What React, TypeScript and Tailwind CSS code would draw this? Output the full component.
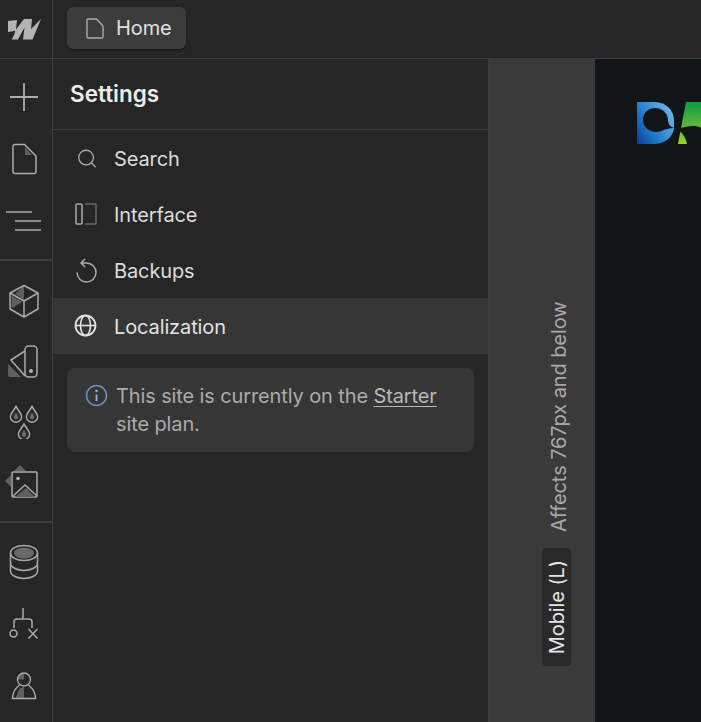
import { Search } from 'lucide-react'

const railIcon = 'block'
const stroke = '#ababab'

function WebflowLogo() {
  return (
    <svg width="33" height="22" viewBox="0 0 33 22" className={railIcon}>
      <path d="M0 3L9 2L8 11.500L16 1H24L23 11L33 1L24.500 21.500H15L16.500 9.500L10 21.500H3.500C6 18 7 15 7 12.500C5 13 2 14 0 14z" fill="#b4b4b4" />
    </svg>
  )
}

function PageIcon({ fold }: { fold?: boolean }) {
  return (
    <svg width="28" height="32" viewBox="0 0 28 32" fill="none" className={railIcon}>
      {fold && <path d="M15 4l7 8h-7z" fill="#5f5f5f" />}
      <path d="M3 3.500A2 2 0 0 1 5 1.500h9.500L26 13v15.500a2 2 0 0 1-2 2H5a2 2 0 0 1-2-2z" stroke={stroke} strokeWidth="1.500" />
    </svg>
  )
}

function RailButton({ children, h }: { children: React.ReactNode; h: string }) {
  return <div className={`flex items-center justify-center pr-[5px] ${h}`}>{children}</div>
}

function Rail() {
  return (
    <div className="w-[53px] shrink-0 border-r border-[#3e3e3e] flex flex-col">
      <div className="h-[200px] pt-[7px] flex flex-col">
        <RailButton h="h-[62px]">
          <svg width="30" height="30" viewBox="0 0 30 30" className={railIcon}>
            <path d="M15 1v28M1 15h28" stroke={stroke} strokeWidth="1.800" />
          </svg>
        </RailButton>
        <RailButton h="h-[62px]">
          <PageIcon fold />
        </RailButton>
        <RailButton h="h-[62px]">
          <svg width="38" height="24" viewBox="0 0 38 24" className={railIcon}>
            <path d="M1 3h26M10 12h26M10 21h26" stroke={stroke} strokeWidth="1.600" />
          </svg>
        </RailButton>
      </div>
      <div className="h-[262px] border-t-2 border-[#3e3e3e] flex flex-col pt-[9px]">
        <RailButton h="h-[61px]">
          <svg width="32" height="34" viewBox="0 0 32 34" fill="none" className={railIcon}>
            <path d="M16 2V15.500L7 10z" fill="#5f5f5f" />
            <path d="M3.500 11.500L14 18 3.500 24.500z" fill="#5f5f5f" />
            <path d="M16 1.500L30 9v16l-14 8L2 25V9zM2 9l14 8 14-8M16 17v16" stroke={stroke} strokeWidth="1.500" strokeLinejoin="round" />
          </svg>
        </RailButton>
        <RailButton h="h-[62px]">
          <svg width="32" height="34" viewBox="0 0 32 34" fill="none" className={railIcon}>
            <path d="M0 30V19l13 13H2a2 2 0 0 1-2-2z" fill="#5f5f5f" />
            <path d="M17 6L3 15l14 16" stroke={stroke} strokeWidth="1.500" strokeLinejoin="round" />
            <rect x="17" y="1" width="12" height="31" rx="3.500" fill="#262626" stroke={stroke} strokeWidth="1.500" />
            <circle cx="23" cy="26" r="2" fill="#b5b5b5" />
          </svg>
        </RailButton>
        <RailButton h="h-[58px]">
          <svg width="30" height="34" viewBox="0 0 30 34" fill="none" className={railIcon}>
            <path d="M7 1.500l4.500 7a5.500 5.500 0 1 1-9 0z" stroke={stroke} strokeWidth="1.500" />
            <path d="M23 1.500l4.500 7a5.500 5.500 0 1 1-9 0z" stroke={stroke} strokeWidth="1.500" />
            <path d="M15 19l4.500 7a5.500 5.500 0 1 1-9 0z" stroke={stroke} strokeWidth="1.500" />
            <path d="M7 7l2 4a2.300 2.300 0 1 1-4 0zM23 7l2 4a2.300 2.300 0 1 1-4 0zM15 24.500l2 4a2.300 2.300 0 1 1-4 0z" fill="#6a6a6a" />
          </svg>
        </RailButton>
        <RailButton h="h-[64px]">
          <svg width="36" height="38" viewBox="0 0 36 38" fill="none" className={`${railIcon} -ml-[4px]`}>
            <path d="M10 7l6-6 6 6zM1 17l6-6v12z" fill="#5f5f5f" />
            <rect x="8" y="8" width="25" height="25" rx="1" stroke={stroke} strokeWidth="1.500" />
            <path d="M11 33l11-9 9 9z" fill="#5f5f5f" />
            <path d="M8.500 32.500L21 21l12 11" stroke={stroke} strokeWidth="1.500" />
            <circle cx="14" cy="14.500" r="1.800" fill="#b5b5b5" />
          </svg>
        </RailButton>
      </div>
      <div className="flex-1 border-t-2 border-[#3e3e3e] flex flex-col pt-[8px]">
        <RailButton h="h-[62px]">
          <svg width="30" height="36" viewBox="0 0 30 36" fill="none" className={railIcon}>
            <ellipse cx="15" cy="9" rx="10" ry="5.500" fill="#6a6a6a" />
            <ellipse cx="15" cy="9" rx="13.500" ry="7.500" stroke={stroke} strokeWidth="1.500" />
            <path d="M1.500 9v18c0 4 6 7.500 13.500 7.500S28.500 31 28.500 27V9M1.500 19c0 4 6 7.500 13.500 7.500S28.500 23 28.500 19" stroke={stroke} strokeWidth="1.500" />
          </svg>
        </RailButton>
        <RailButton h="h-[62px]">
          <svg width="32" height="32" viewBox="0 0 32 32" fill="none" className={railIcon}>
            <path d="M15 0v11M6 20v-6a3 3 0 0 1 3-3h12a3 3 0 0 1 3 3v6" stroke={stroke} strokeWidth="1.500" />
            <circle cx="5.500" cy="25.500" r="3.500" stroke={stroke} strokeWidth="1.500" />
            <path d="M20.500 21l9 9.500M29.500 21l-9 9.500" stroke={stroke} strokeWidth="1.500" />
          </svg>
        </RailButton>
        <RailButton h="h-[62px]">
          <svg width="26" height="28" viewBox="0 0 28 30" fill="none" className={railIcon}>
            <path d="M14 16c-3 0-5 2-6 4l-3 8h9z" fill="#5f5f5f" />
            <path d="M14 1v7H7a7 7 0 0 1 7-7z" fill="#5f5f5f" />
            <circle cx="14" cy="8" r="7" stroke={stroke} strokeWidth="1.500" />
            <path d="M9 14l-2 2c-3 2.500-5 6-5.500 12.500h25C26 22 24 18.500 21 16l-2-2" stroke={stroke} strokeWidth="1.500" />
          </svg>
        </RailButton>
      </div>
    </div>
  )
}

function MenuRow({ icon, label, active }: { icon: React.ReactNode; label: string; active?: boolean }) {
  return (
    <div className={`h-[56px] flex items-center pl-[21px] gap-[16px] text-[20px] tracking-[-0.12px] ${active ? 'bg-[#363636] text-[#e2e2e2]' : 'text-[#dcdcdc]'}`}>
      <span className="w-[24px] flex justify-center">{icon}</span>
      <span className="pt-[2px]">{label}</span>
    </div>
  )
}

function SettingsPanel() {
  return (
    <div className="w-[436px] shrink-0 border-r border-[#3e3e3e] bg-[#262626]">
      <div className="h-[71px] border-b border-[#3e3e3e] flex items-center pl-[17px] text-[22.500px] font-semibold text-[#ececec]">
        Settings
      </div>
      <MenuRow label="Search" icon={<Search size={23} strokeWidth={1.400} color={stroke} className="ml-[2px]" />} />
      <MenuRow
        label="Interface"
        icon={
          <svg width="22" height="22" viewBox="0 0 22 22" fill="none" className={railIcon}>
            <rect x="1" y="1" width="6" height="20" rx="1" stroke={stroke} strokeWidth="1.500" />
            <path d="M10 1h10.500a.500.500 0 0 1 .500.500v19a.500.500 0 0 1-.500.500H10" stroke="#666" strokeWidth="1.500" />
          </svg>
        }
      />
      <MenuRow
        label="Backups"
        icon={
          <svg width="22" height="25" viewBox="0 0 22 25" fill="none" className={`${railIcon} ml-[2px]`}>
            <path d="M1 14.500A9.500 9.500 0 1 0 10.500 5H5.500M9 1L5 5l4 4" stroke={stroke} strokeWidth="1.500" />
          </svg>
        }
      />
      <MenuRow
        label="Localization"
        active
        icon={
          <svg width="23" height="23" viewBox="0 0 23 23" fill="none" className={`${railIcon} -ml-[1px] -mt-[1px]`}>
            <circle cx="11.500" cy="11.500" r="10" stroke="#e2e2e2" strokeWidth="1.800" />
            <ellipse cx="11.500" cy="11.500" rx="5" ry="10" stroke="#e2e2e2" strokeWidth="1.600" />
            <path d="M1.500 11.500h20" stroke="#e2e2e2" strokeWidth="1.600" />
          </svg>
        }
      />
      <div className="mx-[14px] mt-[14px] h-[84px] rounded-[8px] bg-[#363636] pl-[18px] pr-[20px] pt-[14px] flex gap-[8px] text-[20px] tracking-[-0.12px] leading-[28px] text-[#ababab]">
        <svg width="23" height="23" viewBox="0 0 23 23" fill="none" className="shrink-0 mt-[2px]">
          <circle cx="11.500" cy="11.500" r="10" stroke="#6f93b8" strokeWidth="1.500" />
          <circle cx="11.500" cy="7" r="1.300" fill="#8fb8e0" />
          <path d="M11.500 10.500v6.500" stroke="#8fb8e0" strokeWidth="1.800" />
        </svg>
        <p>
          This site is currently on the <span className="underline underline-offset-[3px] decoration-[1px] text-[#b8b8b8]">Starter</span> site plan.
        </p>
      </div>
    </div>
  )
}

function BreakpointStrip() {
  return (
    <div className="w-[106px] shrink-0 bg-[#3a3a3a] flex flex-col items-start pl-[53px] pt-[243px]">
      <div className="[writing-mode:vertical-rl] rotate-180 text-[#a8a8a8] text-[20px] tracking-[-0.09px] leading-[24px] h-[230px] w-[30px] ml-[2px] flex items-center whitespace-nowrap">
        Affects 767px and below
      </div>
      <div className="mt-[16px] w-[29px] h-[118px] rounded-[4px] bg-[#292929] text-[#e6e6e6] text-[20px] tracking-[-0.1px] flex items-center justify-center">
        <span className="[writing-mode:vertical-rl] rotate-180 whitespace-nowrap">Mobile (L)</span>
      </div>
    </div>
  )
}

function SiteLogo() {
  return (
    <svg width="64" height="42" viewBox="0 0 64 42" className={railIcon}>
      <defs>
        <linearGradient id="blue" x1="0" y1="1" x2="1" y2="0.300">
          <stop offset="0" stopColor="#0b3b93" />
          <stop offset="0.400" stopColor="#1e78c8" />
          <stop offset="1" stopColor="#6ab4e6" />
        </linearGradient>
        <linearGradient id="green" x1="0" y1="0" x2="0" y2="1">
          <stop offset="0" stopColor="#0c9a45" />
          <stop offset="1" stopColor="#9ad02c" />
        </linearGradient>
      </defs>
      <path d="M0 0h17C30 0 37 9 37 19v7c-1 9-9 16-20 16H0z" fill="url(#blue)" />
      <path d="M18 6C11 6 6 11 6 18c0 7 6 12 13 12 6 0 9-4 18-4-3-1-6-3-6-8C31 11 25 6 18 6z" fill="#121518" />
      <path d="M49 0H64V42H41z" fill="url(#green)" />
      <path d="M38 26c6 1 12-2 18-2 4 0 7 1 10 3V42H50l-1-4C47 33 44 29 38 26z" fill="#121518" />
    </svg>
  )
}

export default function App() {
  return (
    <div className="w-[701px] h-[722px] overflow-hidden bg-[#262626] flex flex-col font-['Inter',sans-serif]">
      <div className="h-[59px] shrink-0 border-b border-[#3e3e3e] flex">
        <div className="w-[53px] shrink-0 border-r border-[#3e3e3e] flex items-center pl-[8px]">
          <WebflowLogo />
        </div>
        <div className="pl-[14px] pt-[7px]">
          <div className="w-[119px] h-[42px] rounded-[6px] bg-[#3c3c3c] shadow-[0_1px_2px_#111] flex items-center pl-[19px] gap-[12px] text-[20px] tracking-[-0.1px] text-[#e0e0e0]">
            <svg width="18" height="21" viewBox="0 0 18 21" fill="none" className={railIcon}>
              <path d="M1 2a1 1 0 0 1 1-1h8.500L17 8v11a1 1 0 0 1-1 1H2a1 1 0 0 1-1-1z" stroke={stroke} strokeWidth="1.400" />
            </svg>
            Home
          </div>
        </div>
      </div>
      <div className="flex-1 flex min-h-0">
        <Rail />
        <SettingsPanel />
        <BreakpointStrip />
        <div className="flex-1 bg-[#121518] overflow-hidden pl-[42px] pt-[43px]">
          <SiteLogo />
        </div>
      </div>
    </div>
  )
}
